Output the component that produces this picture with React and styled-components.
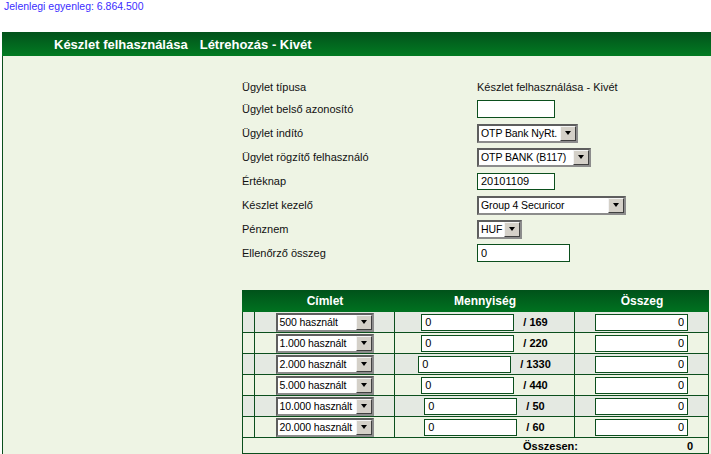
import React from 'react';
import styled, { createGlobalStyle } from 'styled-components';

const GlobalStyle = createGlobalStyle`
  body {
    margin: 0;
    background: #fff;
    font-family: "Liberation Sans", Arial, sans-serif;
    font-size: 11px;
    color: #111;
  }
`;

const green = '#0b4f1d';

const Balance = styled.div`
  padding: 0 4px;
  height: 12px;
  line-height: 12px;
  font-size: 10.5px;
  color: #3b2dff;
`;

const Panel = styled.div`
  margin: 20px 0 0 2px;
  background: #eef4e4;
  border-left: 1px solid ${green};
  min-height: 430px;
`;

const TitleBar = styled.div`
  height: 24px;
  margin-left: -1px;
  padding-left: 52px;
  display: flex;
  align-items: center;
  gap: 12px;
  background: linear-gradient(#02521b, #027b22);
  color: #fff;
  font-weight: bold;
  font-size: 13px;
`;

const Content = styled.div`
  padding: 21px 0 0 239px;
`;

const FormGrid = styled.div`
  display: grid;
  grid-template-columns: 235px auto;
  grid-template-rows: 20px repeat(7, 24px);
  align-items: center;
`;

const Label = styled.div`
  white-space: nowrap;
`;

const Value = styled.div`
  display: flex;
  align-items: center;
`;

const TextField = styled.input`
  box-sizing: border-box;
  width: ${p => p.$w}px;
  height: ${p => p.$h || 18}px;
  margin: 0;
  padding: 0 3px;
  border: 1px solid ${green};
  background: #fff;
  font: 11px "Liberation Sans", Arial, sans-serif;
  color: #000;
  text-align: ${p => (p.$right ? 'right' : 'left')};
  outline: none;
`;

const SelectBox = styled.div`
  display: inline-flex;
  box-sizing: border-box;
  width: ${p => p.$w}px;
  height: 19px;
  border: 2px solid;
  border-color: #5e5e5e #8c8c8c #8c8c8c #5e5e5e;
  background: #fff;
`;

const SelectText = styled.span`
  flex: 1;
  overflow: hidden;
  white-space: nowrap;
  padding-left: 2px;
  line-height: 15px;
  font-size: 10.5px;
  letter-spacing: -0.1px;
  color: #000;
`;

const DropButton = styled.span`
  flex: none;
  width: 16px;
  box-sizing: border-box;
  background: #d4d0c8;
  border: 1px solid;
  border-color: #f4f4f4 #404040 #404040 #f4f4f4;
  display: flex;
  align-items: center;
  justify-content: center;
  &::after {
    content: "";
    border-left: 3.5px solid transparent;
    border-right: 3.5px solid transparent;
    border-top: 4px solid #000;
  }
`;

const Table = styled.div`
  width: 467px;
  margin-top: 25px;
`;

const HeadRow = styled.div`
  display: grid;
  grid-template-columns: 13px 140px 180px 1fr;
  height: 22px;
  align-items: center;
  background: linear-gradient(#00521a, #007220);
  color: #fff;
  font-weight: bold;
  font-size: 12px;
  text-align: center;
`;

const BodyRow = styled.div`
  display: grid;
  grid-template-columns: 12px 140px 180px 1fr;
  height: 21px;
  box-sizing: border-box;
  border: 1px solid ${green};
  border-top: 0;
  background: ${p => (p.$shade ? '#e4e9e2' : '#eef4e4')};
`;

const Cell = styled.div`
  display: flex;
  align-items: center;
  justify-content: center;
  gap: 9px;
  border-right: 1px solid ${green};
  &:last-child {
    border-right: 0;
  }
`;

const Limit = styled.span`
  font-weight: bold;
  color: #000;
  white-space: nowrap;
`;

const TotalRow = styled.div`
  display: grid;
  grid-template-columns: 335px 1fr;
  height: 16px;
  box-sizing: border-box;
  border: 1px solid ${green};
  border-top: 0;
  align-items: center;
  font-weight: bold;
  color: #000;
`;

const TotalLabel = styled.div`
  text-align: right;
`;

const TotalValue = styled.div`
  text-align: right;
  padding-right: 15px;
`;

const Select = ({ w, children }) => (
  <SelectBox $w={w}>
    <SelectText>{children}</SelectText>
    <DropButton />
  </SelectBox>
);

const rows = [
  { name: '500 használt', max: 169 },
  { name: '1.000 használt', max: 220 },
  { name: '2.000 használt', max: 1330 },
  { name: '5.000 használt', max: 440 },
  { name: '10.000 használt', max: 50 },
  { name: '20.000 használt', max: 60 },
];

export default function App() {
  return (
    <>
      <GlobalStyle />
      <Balance>Jelenlegi egyenleg: 6.864.500</Balance>
      <Panel>
        <TitleBar>
          <span>Készlet felhasználása</span>
          <span>Létrehozás - Kivét</span>
        </TitleBar>
        <Content>
          <FormGrid>
            <Label>Ügylet típusa</Label>
            <Value>Készlet felhasználása - Kivét</Value>
            <Label>Ügylet belső azonosító</Label>
            <Value><TextField $w={78} defaultValue="" /></Value>
            <Label>Ügylet indító</Label>
            <Value><Select w={101}>OTP Bank NyRt.</Select></Value>
            <Label>Ügylet rögzítő felhasználó</Label>
            <Value><Select w={114}>OTP BANK (B117)</Select></Value>
            <Label>Értéknap</Label>
            <Value><TextField $w={78} $h={17} defaultValue="20101109" /></Value>
            <Label>Készlet kezelő</Label>
            <Value><Select w={149}>Group 4 Securicor</Select></Value>
            <Label>Pénznem</Label>
            <Value><Select w={45}>HUF</Select></Value>
            <Label>Ellenőrző összeg</Label>
            <Value><TextField $w={93} defaultValue="0" /></Value>
          </FormGrid>

          <Table>
            <HeadRow>
              <span />
              <span>Címlet</span>
              <span>Mennyiség</span>
              <span>Összeg</span>
            </HeadRow>
            {rows.map((r, i) => (
              <BodyRow key={r.name} $shade={i % 2 === 0}>
                <Cell />
                <Cell><Select w={98}>{r.name}</Select></Cell>
                <Cell>
                  <TextField $w={93} $h={17} defaultValue="0" />
                  <Limit>/ {r.max}</Limit>
                </Cell>
                <Cell><TextField $w={93} $h={17} $right defaultValue="0" /></Cell>
              </BodyRow>
            ))}
            <TotalRow>
              <TotalLabel>Összesen:</TotalLabel>
              <TotalValue>0</TotalValue>
            </TotalRow>
          </Table>
        </Content>
      </Panel>
    </>
  );
}
